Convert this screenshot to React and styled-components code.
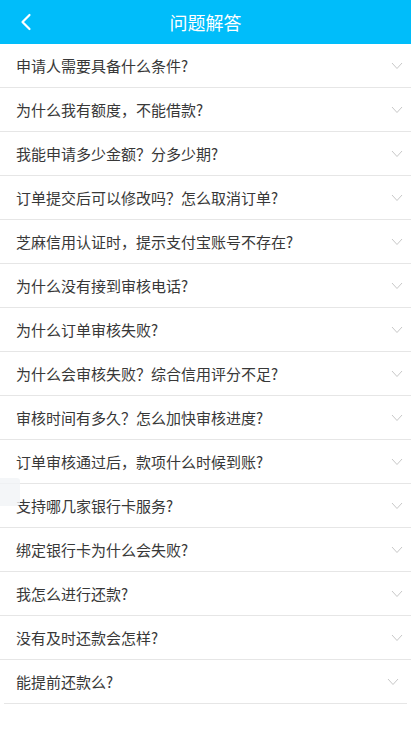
import React from 'react';
import styled, { createGlobalStyle } from 'styled-components';

const GlobalStyle = createGlobalStyle`
  html, body {
    margin: 0;
    padding: 0;
    background: #fff;
    font-family: "Noto Sans CJK SC", "Noto Sans", sans-serif;
  }
`;

const Page = styled.div`
  position: relative;
  width: 411px;
  min-height: 731px;
  background: #fff;
`;

const Header = styled.header`
  height: 44px;
  background: #00bdfa;
  display: flex;
  align-items: center;
  justify-content: center;
  position: relative;
  color: #fff;
`;

const BackButton = styled.button`
  position: absolute;
  left: 12px;
  top: 8px;
  width: 28px;
  height: 28px;
  border: 0;
  padding: 0;
  background: transparent;
  display: flex;
  align-items: center;
  justify-content: center;
`;

const Title = styled.h1`
  margin: 0;
  font-size: 18px;
  font-weight: 400;
`;

const List = styled.ul`
  list-style: none;
  margin: 0;
  padding: 0;
`;

const Row = styled.li`
  height: 44px;
  box-sizing: border-box;
  display: flex;
  align-items: center;
  justify-content: space-between;
  padding: 0 8px 0 16px;
  border-bottom: 1px solid #e6e6e6;
  margin: ${({ $last }) => ($last ? '0 4px' : '0')};
  padding-left: ${({ $last }) => ($last ? '12px' : '16px')};
`;

const Question = styled.span`
  font-size: 15px;
  color: #383838;
`;

const Chevron = styled.svg`
  width: 12px;
  height: 8px;
  margin-top: 1px;
`;

const Ghost = styled.div`
  position: absolute;
  left: 0;
  top: 478px;
  width: 20px;
  height: 28px;
  background: #f1f4f6;
  border-radius: 0 3px 3px 0;
  opacity: 0.8;
`;

const questions = [
  '申请人需要具备什么条件?',
  '为什么我有额度，不能借款?',
  '我能申请多少金额？分多少期?',
  '订单提交后可以修改吗？怎么取消订单?',
  '芝麻信用认证时，提示支付宝账号不存在?',
  '为什么没有接到审核电话?',
  '为什么订单审核失败?',
  '为什么会审核失败？综合信用评分不足?',
  '审核时间有多久？怎么加快审核进度?',
  '订单审核通过后，款项什么时候到账?',
  '支持哪几家银行卡服务?',
  '绑定银行卡为什么会失败?',
  '我怎么进行还款?',
  '没有及时还款会怎样?',
  '能提前还款么?',
];

const App = () => (
  <Page>
    <GlobalStyle />
    <Header>
      <BackButton aria-label="back">
        <svg width="12" height="18" viewBox="0 0 12 18">
          <path d="M9.5 2 L2.5 9 L9.5 16" fill="none" stroke="#fff" strokeWidth="2.2" strokeLinecap="round" strokeLinejoin="round" />
        </svg>
      </BackButton>
      <Title>问题解答</Title>
    </Header>
    <List>
      {questions.map((q, i) => (
        <Row key={i} $last={i === questions.length - 1}>
          <Question>{q}</Question>
          <Chevron viewBox="0 0 12 8">
            <path d="M1 1 L6 6.5 L11 1" fill="none" stroke="#c8c8c8" strokeWidth="1" />
          </Chevron>
        </Row>
      ))}
    </List>
    <Ghost />
  </Page>
);

export default App;
